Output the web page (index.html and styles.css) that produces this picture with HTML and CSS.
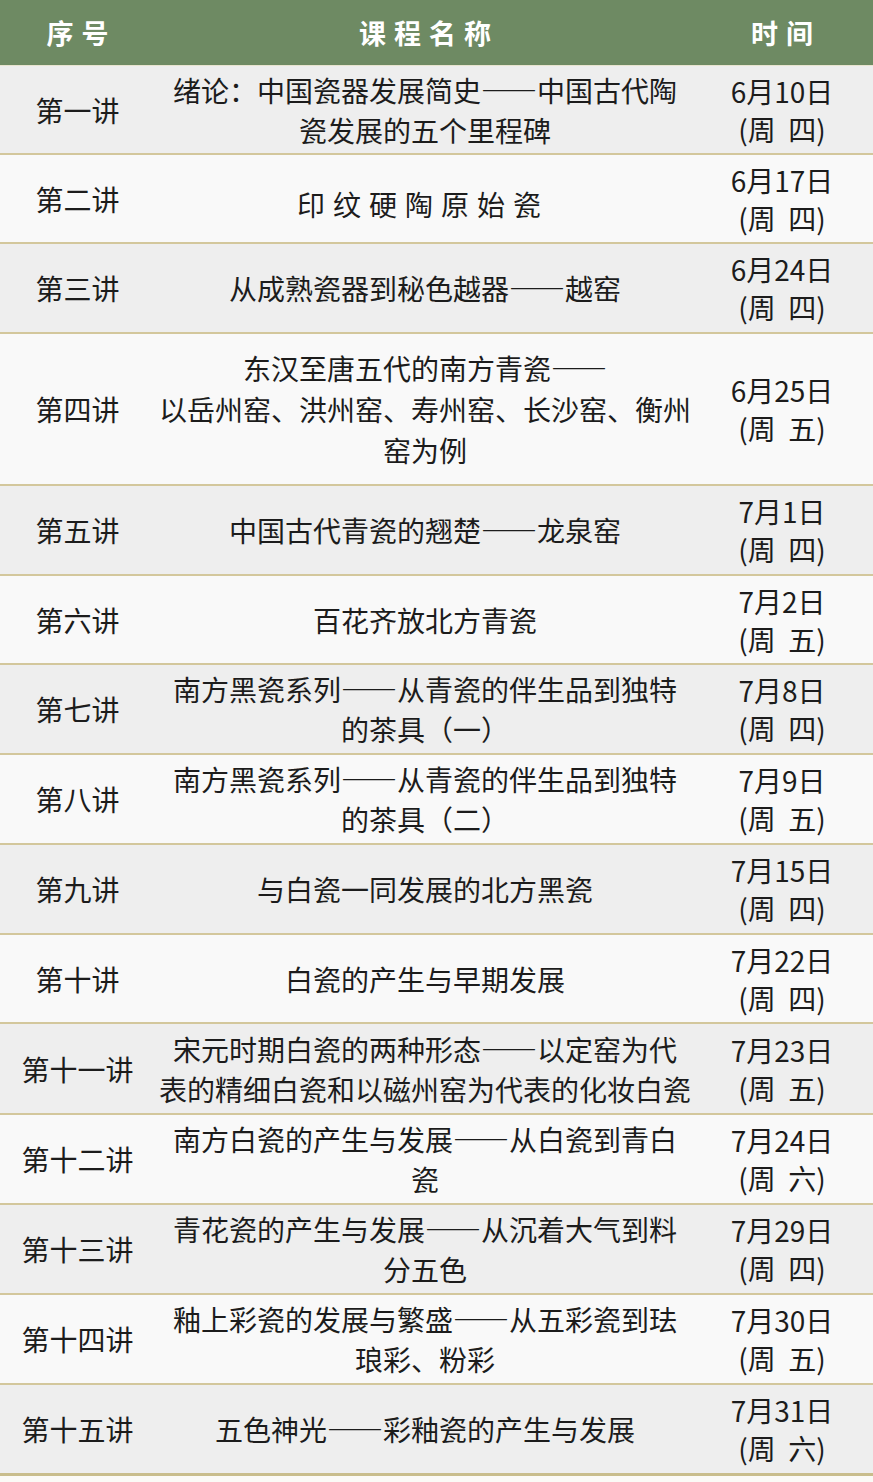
FILE: index.html
```html
<!DOCTYPE html>
<html lang="zh">
<head>
<meta charset="utf-8">
<title>课程表</title>
<link rel="stylesheet" href="styles.css">
</head>
<body>
<div class="table">
  <div class="row head">
    <div class="c1">序号</div>
    <div class="c2">课程名称</div>
    <div class="c3">时间</div>
  </div>
  <div class="row grey h89">
    <div class="c1">第一讲</div>
    <div class="c2">绪论：中国瓷器发展简史——中国古代陶<br>瓷发展的五个里程碑</div>
    <div class="c3">6月10日<br>(周&nbsp;&nbsp;四)</div>
  </div>
  <div class="row white h89">
    <div class="c1">第二讲</div>
    <div class="c2 spaced">印纹硬陶原始瓷</div>
    <div class="c3">6月17日<br>(周&nbsp;&nbsp;四)</div>
  </div>
  <div class="row grey">
    <div class="c1">第三讲</div>
    <div class="c2">从成熟瓷器到秘色越器——越窑</div>
    <div class="c3">6月24日<br>(周&nbsp;&nbsp;四)</div>
  </div>
  <div class="row white tall">
    <div class="c1">第四讲</div>
    <div class="c2">东汉至唐五代的南方青瓷——<br>以岳州窑、洪州窑、寿州窑、长沙窑、衡州<br>窑为例</div>
    <div class="c3">6月25日<br>(周&nbsp;&nbsp;五)</div>
  </div>
  <div class="row grey">
    <div class="c1">第五讲</div>
    <div class="c2">中国古代青瓷的翘楚——龙泉窑</div>
    <div class="c3">7月1日<br>(周&nbsp;&nbsp;四)</div>
  </div>
  <div class="row white h89">
    <div class="c1">第六讲</div>
    <div class="c2">百花齐放北方青瓷</div>
    <div class="c3">7月2日<br>(周&nbsp;&nbsp;五)</div>
  </div>
  <div class="row grey">
    <div class="c1">第七讲</div>
    <div class="c2">南方黑瓷系列——从青瓷的伴生品到独特<br>的茶具（一）</div>
    <div class="c3">7月8日<br>(周&nbsp;&nbsp;四)</div>
  </div>
  <div class="row white">
    <div class="c1">第八讲</div>
    <div class="c2">南方黑瓷系列——从青瓷的伴生品到独特<br>的茶具（二）</div>
    <div class="c3">7月9日<br>(周&nbsp;&nbsp;五)</div>
  </div>
  <div class="row grey">
    <div class="c1">第九讲</div>
    <div class="c2">与白瓷一同发展的北方黑瓷</div>
    <div class="c3">7月15日<br>(周&nbsp;&nbsp;四)</div>
  </div>
  <div class="row white h89">
    <div class="c1">第十讲</div>
    <div class="c2">白瓷的产生与早期发展</div>
    <div class="c3">7月22日<br>(周&nbsp;&nbsp;四)</div>
  </div>
  <div class="row grey h91">
    <div class="c1">第十一讲</div>
    <div class="c2">宋元时期白瓷的两种形态——以定窑为代<br>表的精细白瓷和以磁州窑为代表的化妆白瓷</div>
    <div class="c3">7月23日<br>(周&nbsp;&nbsp;五)</div>
  </div>
  <div class="row white">
    <div class="c1">第十二讲</div>
    <div class="c2">南方白瓷的产生与发展——从白瓷到青白<br>瓷</div>
    <div class="c3">7月24日<br>(周&nbsp;&nbsp;六)</div>
  </div>
  <div class="row grey">
    <div class="c1">第十三讲</div>
    <div class="c2">青花瓷的产生与发展——从沉着大气到料<br>分五色</div>
    <div class="c3">7月29日<br>(周&nbsp;&nbsp;四)</div>
  </div>
  <div class="row white">
    <div class="c1">第十四讲</div>
    <div class="c2">釉上彩瓷的发展与繁盛——从五彩瓷到珐<br>琅彩、粉彩</div>
    <div class="c3">7月30日<br>(周&nbsp;&nbsp;五)</div>
  </div>
  <div class="row grey last">
    <div class="c1">第十五讲</div>
    <div class="c2">五色神光——彩釉瓷的产生与发展</div>
    <div class="c3">7月31日<br>(周&nbsp;&nbsp;六)</div>
  </div>
</div>
</body>
</html>
```

FILE: styles.css
```css
html, body {
  margin: 0;
  padding: 0;
  background: #fbfaf6;
}
body {
  width: 873px;
  height: 1482px;
  overflow: hidden;
  font-family: "Noto Sans CJK SC", "Noto Sans", sans-serif;
  color: #1c1c1c;
}
.table {
  display: flex;
  flex-direction: column;
}
.row {
  display: grid;
  grid-template-columns: 155px 540px 178px;
  align-items: center;
  height: 88px;
  border-bottom: 2px solid #d3c79c;
  font-size: 28px;
  line-height: 40px;
  text-align: center;
}
.row.h89 {
  height: 87px;
}
.row.h91 {
  height: 89px;
}
.row.head {
  height: 65px;
  background: #6e8a63;
  color: #ffffff;
  font-weight: 700;
  font-size: 27px;
  letter-spacing: 8px;
  border-bottom: 1px solid #e8e4cf;
}
.row.head > div {
  padding-left: 8px;
}
.row.grey {
  background: #eeeeee;
}
.row.white {
  background: #f9f9f9;
}
.row.tall {
  height: 150px;
  line-height: 41px;
}
.row.last {
  border-bottom: 3px solid #c9bd8c;
}
.c3 {
  line-height: 38px;
  padding-right: 4px;
}
.spaced {
  letter-spacing: 8px;
  padding-right: 4px;
  padding-top: 10px;
}
```
